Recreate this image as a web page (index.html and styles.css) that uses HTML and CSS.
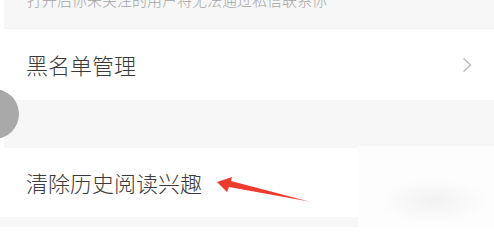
FILE: index.html
```html
<!DOCTYPE html>
<html lang="zh">
<head>
<meta charset="utf-8">
<link rel="stylesheet" href="styles.css">
</head>
<body>
<div class="page">
  <div class="tip-band"><p class="tip">打开后你未关注的用户将无法通过私信联系你</p></div>
  <div class="row row-first">
    <span class="label">黑名单管理</span>
    <svg class="chevron" width="10" height="16" viewBox="0 0 10 16"><polyline points="1.5,1.5 8.5,8 1.5,14.5" fill="none" stroke="#bdbdbd" stroke-width="1.6"/></svg>
  </div>
  <div class="gap"></div>
  <div class="row row-second">
    <span class="label">清除历史阅读兴趣</span>
  </div>
  <div class="bottom"></div>
  <div class="knob"></div>
  <div class="smudge"></div>
  <svg class="arrow" width="494" height="227" viewBox="0 0 494 227"><polygon points="217,182 232,177 231,181 309,201.5 229,187 227,192" fill="#ee3b2f"/></svg>
</div>
</body>
</html>
```
FILE: styles.css
```css
html, body { margin: 0; padding: 0; background: #fff; }
.page {
  position: relative;
  width: 494px;
  height: 227px;
  overflow: hidden;
  font-family: "Noto Sans CJK SC", "Noto Sans", sans-serif;
}
.tip-band {
  height: 28px;
  margin-left: 4px;
  background: #f7f7f7;
  overflow: hidden;
  border-bottom: 1px solid #f1f1f1;
}
.tip {
  margin: -8px 0 0 0;
  padding-left: 23px;
  font-size: 15px;
  line-height: 15px;
  font-weight: 300;
  color: #a3a3a3;
  white-space: nowrap;
}
.row {
  display: flex;
  align-items: center;
  justify-content: space-between;
  padding: 0 22px 0 26px;
  background: #fff;
}
.row-first { height: 71px; }
.row-second { height: 69px; }
.label {
  font-size: 22px;
  line-height: 24px;
  font-weight: 300;
  color: #3a3a3a;
  margin-bottom: 2px;
}
.chevron { display: block; }
.gap { height: 48px; background: #f7f7f7; margin-left: 4px; }
.bottom { height: 10px; background: #f7f7f7; }
.knob {
  position: absolute;
  left: -31px;
  top: 89px;
  width: 50px;
  height: 50px;
  border-radius: 50%;
  background: #a9a9a9;
}
.smudge {
  position: absolute;
  left: 358px;
  top: 146px;
  width: 136px;
  height: 81px;
  background: radial-gradient(ellipse 55px 22px at 75px 55px, rgba(0,0,0,0.045), rgba(0,0,0,0) 100%), #fdfdfd;
}
.arrow { position: absolute; left: 0; top: 0; }
```
